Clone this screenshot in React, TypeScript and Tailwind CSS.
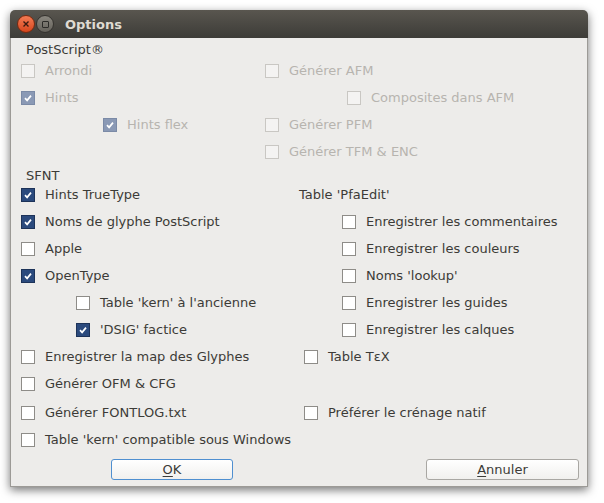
import React from 'react';

type CheckProps = {
  label: string;
  checked?: boolean;
  disabled?: boolean;
};

const Check: React.FC<CheckProps> = ({ label, checked = false, disabled = false }) => {
  let box = 'bg-white border-[#8e8c88]';
  if (disabled && checked) box = 'bg-[#8a99b5] border-[#7b8aa6]';
  else if (disabled) box = 'bg-[#f4f3f2] border-[#c9c7c3]';
  else if (checked) box = 'bg-[#2b4a7d] border-[#1d3359]';

  return (
    <div className="flex items-center gap-[10px]">
      <div className={`w-[14px] h-[14px] border flex items-center justify-center shrink-0 ${box}`}>
        {checked && (
          <svg width="10" height="10" viewBox="0 0 10 10">
            <path d="M2 5.2 L4.1 7.4 L8 2.6" fill="none" stroke="white" strokeWidth="1.7" />
          </svg>
        )}
      </div>
      <span className={disabled ? 'text-[#b7b4af]' : 'text-[#3c3b37]'}>{label}</span>
    </div>
  );
};

const Row: React.FC<{ children: React.ReactNode; className?: string }> = ({ children, className = '' }) => (
  <div className={`flex items-center h-[27px] ${className}`}>{children}</div>
);

export default function App() {
  return (
    <div className="w-[604px] h-[503px] bg-white pt-[10px] pl-[10px]">
      <div
        className="w-[578px] h-[477px] flex flex-col rounded-t-[5px] shadow-[0_3px_10px_rgba(0,0,0,0.55)] text-[13px] leading-[15px]"
        style={{ fontFamily: '"DejaVu Sans", sans-serif' }}
      >
        {/* title bar */}
        <div className="h-[28px] rounded-t-[5px] bg-gradient-to-b from-[#59564f] to-[#3d3c38] flex items-center pl-[7px] shrink-0">
          <div className="w-[18px] h-[18px] rounded-full bg-gradient-to-b from-[#f37b53] to-[#d6451a] border border-[#7a2a10] flex items-center justify-center">
            <svg width="8" height="8" viewBox="0 0 8 8">
              <path d="M1.5 1.5 L6.5 6.5 M6.5 1.5 L1.5 6.5" stroke="#3a1a10" strokeWidth="1.4" />
            </svg>
          </div>
          <div className="ml-[1px] w-[18px] h-[18px] rounded-full bg-gradient-to-b from-[#8a877f] to-[#65625b] border border-[#35332f] flex items-center justify-center">
            <div className="w-[7px] h-[7px] border border-[#2c2b28] rounded-[1px]" />
          </div>
          <span className="ml-[11px] font-bold text-[13px] text-[#dfdbd2]">Options</span>
        </div>

        {/* body */}
        <div className="flex-1 bg-[#edecea] border-x border-b border-[#9c9a96] flex flex-col">
          <div className="h-[19px] leading-[24px] pl-[15px] text-[#3c3b37]">PostScript®</div>
          <Row>
            <div className="w-[254px] pl-[10px]"><Check label="Arrondi" disabled /></div>
            <Check label="Générer AFM" disabled />
          </Row>
          <Row>
            <div className="w-[254px] pl-[10px]"><Check label="Hints" disabled checked /></div>
            <div className="pl-[82px]"><Check label="Composites dans AFM" disabled /></div>
          </Row>
          <Row>
            <div className="w-[254px] pl-[92px]"><Check label="Hints flex" disabled checked /></div>
            <Check label="Générer PFM" disabled />
          </Row>
          <Row>
            <div className="w-[254px]" />
            <Check label="Générer TFM & ENC" disabled />
          </Row>

          <div className="h-[16px] leading-[22px] pl-[15px] text-[#3c3b37]">SFNT</div>
          <Row>
            <div className="w-[288px] pl-[10px]"><Check label="Hints TrueType" checked /></div>
            <span className="text-[#3c3b37]">Table 'PfaEdit'</span>
          </Row>
          <Row>
            <div className="w-[331px] pl-[10px]"><Check label="Noms de glyphe PostScript" checked /></div>
            <Check label="Enregistrer les commentaires" />
          </Row>
          <Row>
            <div className="w-[331px] pl-[10px]"><Check label="Apple" /></div>
            <Check label="Enregistrer les couleurs" />
          </Row>
          <Row>
            <div className="w-[331px] pl-[10px]"><Check label="OpenType" checked /></div>
            <Check label="Noms 'lookup'" />
          </Row>
          <Row>
            <div className="w-[331px] pl-[65px]"><Check label="Table 'kern' à l'ancienne" /></div>
            <Check label="Enregistrer les guides" />
          </Row>
          <Row>
            <div className="w-[331px] pl-[65px]"><Check label="'DSIG' factice" checked /></div>
            <Check label="Enregistrer les calques" />
          </Row>

          <Row>
            <div className="w-[293px] pl-[10px]"><Check label="Enregistrer la map des Glyphes" /></div>
            <Check label="Table TεX" />
          </Row>
          <Row>
            <div className="w-[293px] pl-[10px]"><Check label="Générer OFM & CFG" /></div>
          </Row>
          <Row className="mt-[2px]">
            <div className="w-[293px] pl-[10px]"><Check label="Générer FONTLOG.txt" /></div>
            <Check label="Préférer le crénage natif" />
          </Row>
          <Row>
            <div className="w-[293px] pl-[10px]"><Check label="Table 'kern' compatible sous Windows" /></div>
          </Row>

          <div className="flex mt-[6px] pl-[100px]">
            <button className="w-[122px] h-[21px] rounded-[3px] border border-[#4f8fd0] bg-gradient-to-b from-white to-[#f1f0ee] text-[#3c3b37]">
              <span className="underline underline-offset-2">O</span>K
            </button>
            <button className="ml-[193px] w-[153px] h-[21px] rounded-[3px] border border-[#a9a7a3] bg-gradient-to-b from-white to-[#f1f0ee] text-[#3c3b37]">
              <span className="underline underline-offset-2">A</span>nnuler
            </button>
          </div>
        </div>
      </div>
    </div>
  );
}
